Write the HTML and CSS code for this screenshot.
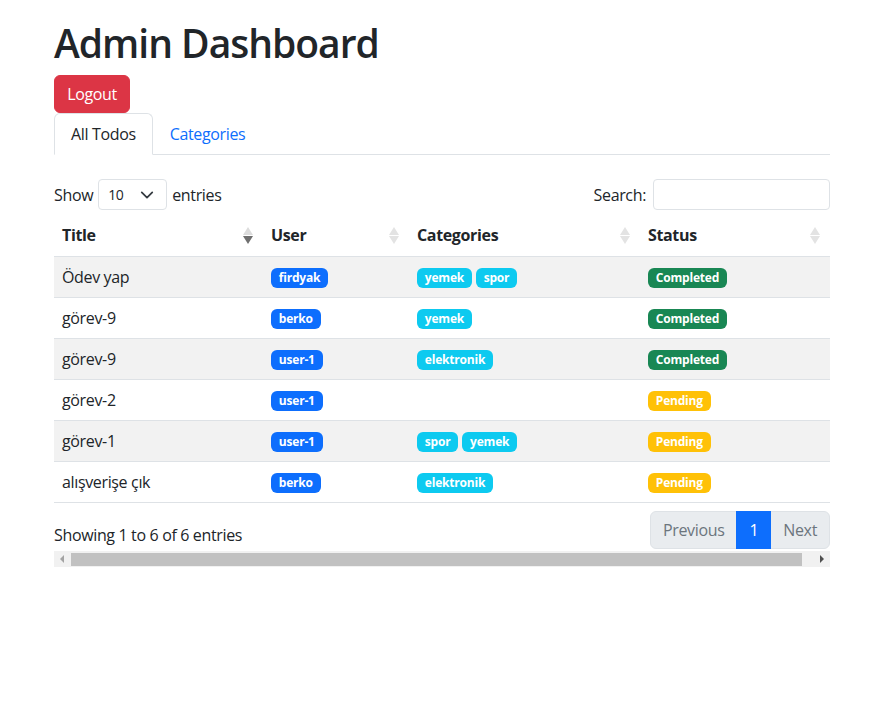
FILE: index.html
```html
<!DOCTYPE html>
<html lang="tr">
<head>
<meta charset="utf-8">
<title>Admin Dashboard</title>
<link rel="stylesheet" href="styles.css">
</head>
<body>
<div class="container">
  <h1 class="title">Admin Dashboard</h1>
  <button class="btn-logout">Logout</button>
  <ul class="tabs">
    <li class="tab active">All Todos</li>
    <li class="tab">Categories</li>
  </ul>
  <div class="dt-wrapper">
    <div class="dt-top">
      <label class="length">Show
        <span class="select">10
          <svg class="chev" width="16" height="16" viewBox="0 0 16 16"><path d="M2 5l6 6 6-6" fill="none" stroke="#343a40" stroke-width="2" stroke-linecap="round" stroke-linejoin="round"/></svg>
        </span>
        entries</label>
      <label class="search">Search: <span class="search-input"></span></label>
    </div>
    <table class="table">
      <thead>
        <tr>
          <th class="c-title"><span>Title</span><i class="sort desc"></i></th>
          <th class="c-user"><span>User</span><i class="sort"></i></th>
          <th class="c-cat"><span>Categories</span><i class="sort"></i></th>
          <th class="c-status"><span>Status</span><i class="sort"></i></th>
        </tr>
      </thead>
      <tbody>
        <tr class="odd">
          <td>Ödev yap</td>
          <td><span class="badge b-blue">firdyak</span></td>
          <td><span class="badge b-info">yemek</span><span class="badge b-info">spor</span></td>
          <td><span class="badge b-green">Completed</span></td>
        </tr>
        <tr>
          <td>görev-9</td>
          <td><span class="badge b-blue">berko</span></td>
          <td><span class="badge b-info">yemek</span></td>
          <td><span class="badge b-green">Completed</span></td>
        </tr>
        <tr class="odd">
          <td>görev-9</td>
          <td><span class="badge b-blue">user-1</span></td>
          <td><span class="badge b-info">elektronik</span></td>
          <td><span class="badge b-green">Completed</span></td>
        </tr>
        <tr>
          <td>görev-2</td>
          <td><span class="badge b-blue">user-1</span></td>
          <td></td>
          <td><span class="badge b-yellow">Pending</span></td>
        </tr>
        <tr class="odd">
          <td>görev-1</td>
          <td><span class="badge b-blue">user-1</span></td>
          <td><span class="badge b-info">spor</span><span class="badge b-info">yemek</span></td>
          <td><span class="badge b-yellow">Pending</span></td>
        </tr>
        <tr>
          <td>alışverişe çık</td>
          <td><span class="badge b-blue">berko</span></td>
          <td><span class="badge b-info">elektronik</span></td>
          <td><span class="badge b-yellow">Pending</span></td>
        </tr>
      </tbody>
    </table>
    <div class="dt-bottom">
      <div class="info">Showing 1 to 6 of 6 entries</div>
      <ul class="pagination">
        <li class="page disabled first">Previous</li>
        <li class="page current">1</li>
        <li class="page disabled last">Next</li>
      </ul>
    </div>
    <div class="hscroll">
      <div class="sb-btn"><svg width="17" height="16" viewBox="0 0 17 16"><path d="M6 8l4-4v8z" fill="#a3a3a3"/></svg></div>
      <div class="sb-track"><div class="sb-thumb"></div></div>
      <div class="sb-btn"><svg width="17" height="16" viewBox="0 0 17 16"><path d="M11 8l-4-4v8z" fill="#505050"/></svg></div>
    </div>
  </div>
</div>
</body>
</html>
```
FILE: styles.css
```css
* { box-sizing: border-box; }
html, body { margin: 0; padding: 0; }
body {
  font-family: "Open Sans", "Noto Sans", sans-serif;
  font-size: 16px;
  line-height: 1.5;
  color: #212529;
  background: #fff;
  letter-spacing: -0.35px;
}
.container {
  width: 776px;
  margin-left: 54px;
  padding-top: 19px;
}
.title {
  margin: 0 0 8px;
  font-size: 39px;
  font-weight: 600;
  line-height: 48px;
  letter-spacing: -1px;
}
.btn-logout {
  display: block;
  font-family: inherit;
  font-size: 16px;
  letter-spacing: -0.35px;
  line-height: 24px;
  padding: 6px 12px;
  height: 38px;
  width: 76px;
  color: #fff;
  background: #dc3545;
  border: 1px solid #dc3545;
  border-radius: 6px;
}
.tabs {
  list-style: none;
  margin: 0;
  padding: 0;
  display: flex;
  border-bottom: 1px solid #dee2e6;
  height: 42px;
}
.tab {
  padding: 8px 16px;
  height: 42px;
  line-height: 24px;
  color: #0d6efd;
  border: 1px solid transparent;
  border-top-left-radius: 6px;
  border-top-right-radius: 6px;
  margin-bottom: -1px;
}
.tab.active {
  color: #212529;
  background: #fff;
  border-color: #dee2e6 #dee2e6 #fff;
}
.dt-wrapper { padding-top: 24px; }
.dt-top {
  display: flex;
  justify-content: space-between;
  align-items: center;
  height: 31px;
}
.length, .search {
  display: flex;
  align-items: center;
}
.select {
  display: inline-flex;
  align-items: center;
  justify-content: space-between;
  width: 69px;
  height: 31px;
  margin: 0 5px 0 5px;
  padding: 0 12px 0 9px;
  font-size: 14px;
  border: 1px solid #dee2e6;
  border-radius: 4px;
}
.chev { width: 14px; height: 14px; }
.search-input {
  display: inline-block;
  width: 177px;
  height: 31px;
  margin-left: 7px;
  border: 1px solid #dee2e6;
  border-radius: 4px;
}
.table {
  width: 100%;
  border-collapse: collapse;
  margin-top: 5px;
  table-layout: fixed;
}
.c-title { width: 209px; }
.c-user { width: 146px; }
.c-cat { width: 231px; }
.c-status { width: 190px; }
th, td {
  padding: 8px;
  text-align: left;
  border-bottom: 1px solid #dee2e6;
  vertical-align: middle;
  height: 41px;
}
th {
  font-weight: 700;
  position: relative;
}
tbody tr.odd td { background: #f2f2f2; }
.sort {
  position: absolute;
  right: 10px;
  top: 12px;
  width: 10px;
  height: 17px;
}
.sort::before, .sort::after {
  content: "";
  position: absolute;
  left: 0;
  border-left: 5px solid transparent;
  border-right: 5px solid transparent;
}
.sort::before {
  top: 0;
  border-bottom: 8px solid #e3e3e3;
}
.sort::after {
  top: 9px;
  border-top: 8px solid #e3e3e3;
}
.sort.desc::before { border-bottom-color: #dcdcdc; }
.sort.desc::after { border-top-color: #6f6f6f; }
.badge {
  display: inline-block;
  font-size: 12px;
  font-weight: 700;
  line-height: 1;
  padding: 4.2px 7.8px;
  color: #fff;
  border-radius: 6px;
  margin-right: 4px;
  vertical-align: middle;
  letter-spacing: -0.2px;
}
.b-blue { background: #0d6efd; }
.b-info { background: #0dcaf0; }
.b-green { background: #198754; }
.b-yellow { background: #ffc107; }
.dt-bottom {
  display: flex;
  justify-content: space-between;
  align-items: flex-end;
  margin-top: 8px;
  height: 40px;
}
.info { padding-bottom: 2px; line-height: 24px; transform: translateY(-2px); }
.pagination {
  list-style: none;
  margin: 0 0 2px;
  padding: 0;
  display: flex;
}
.page {
  height: 38px;
  padding: 6px 12px;
  line-height: 24px;
  border: 1px solid #dee2e6;
  margin-left: -1px;
}
.page.disabled { color: #6c757d; background: #e9ecef; }
.page.first { border-radius: 6px 0 0 6px; }
.page.last { border-radius: 0 6px 6px 0; }
.page.current { color: #fff; background: #0d6efd; border-color: #0d6efd; position: relative; }
.hscroll {
  display: flex;
  height: 16px;
  background: #f1f1f1;
}
.sb-btn { width: 17px; height: 16px; flex: none; }
.sb-btn svg { display: block; }
.sb-track { flex: 1; padding: 2px 11px 1px 0; }
.sb-thumb { height: 13px; background: #c1c1c1; }
```
